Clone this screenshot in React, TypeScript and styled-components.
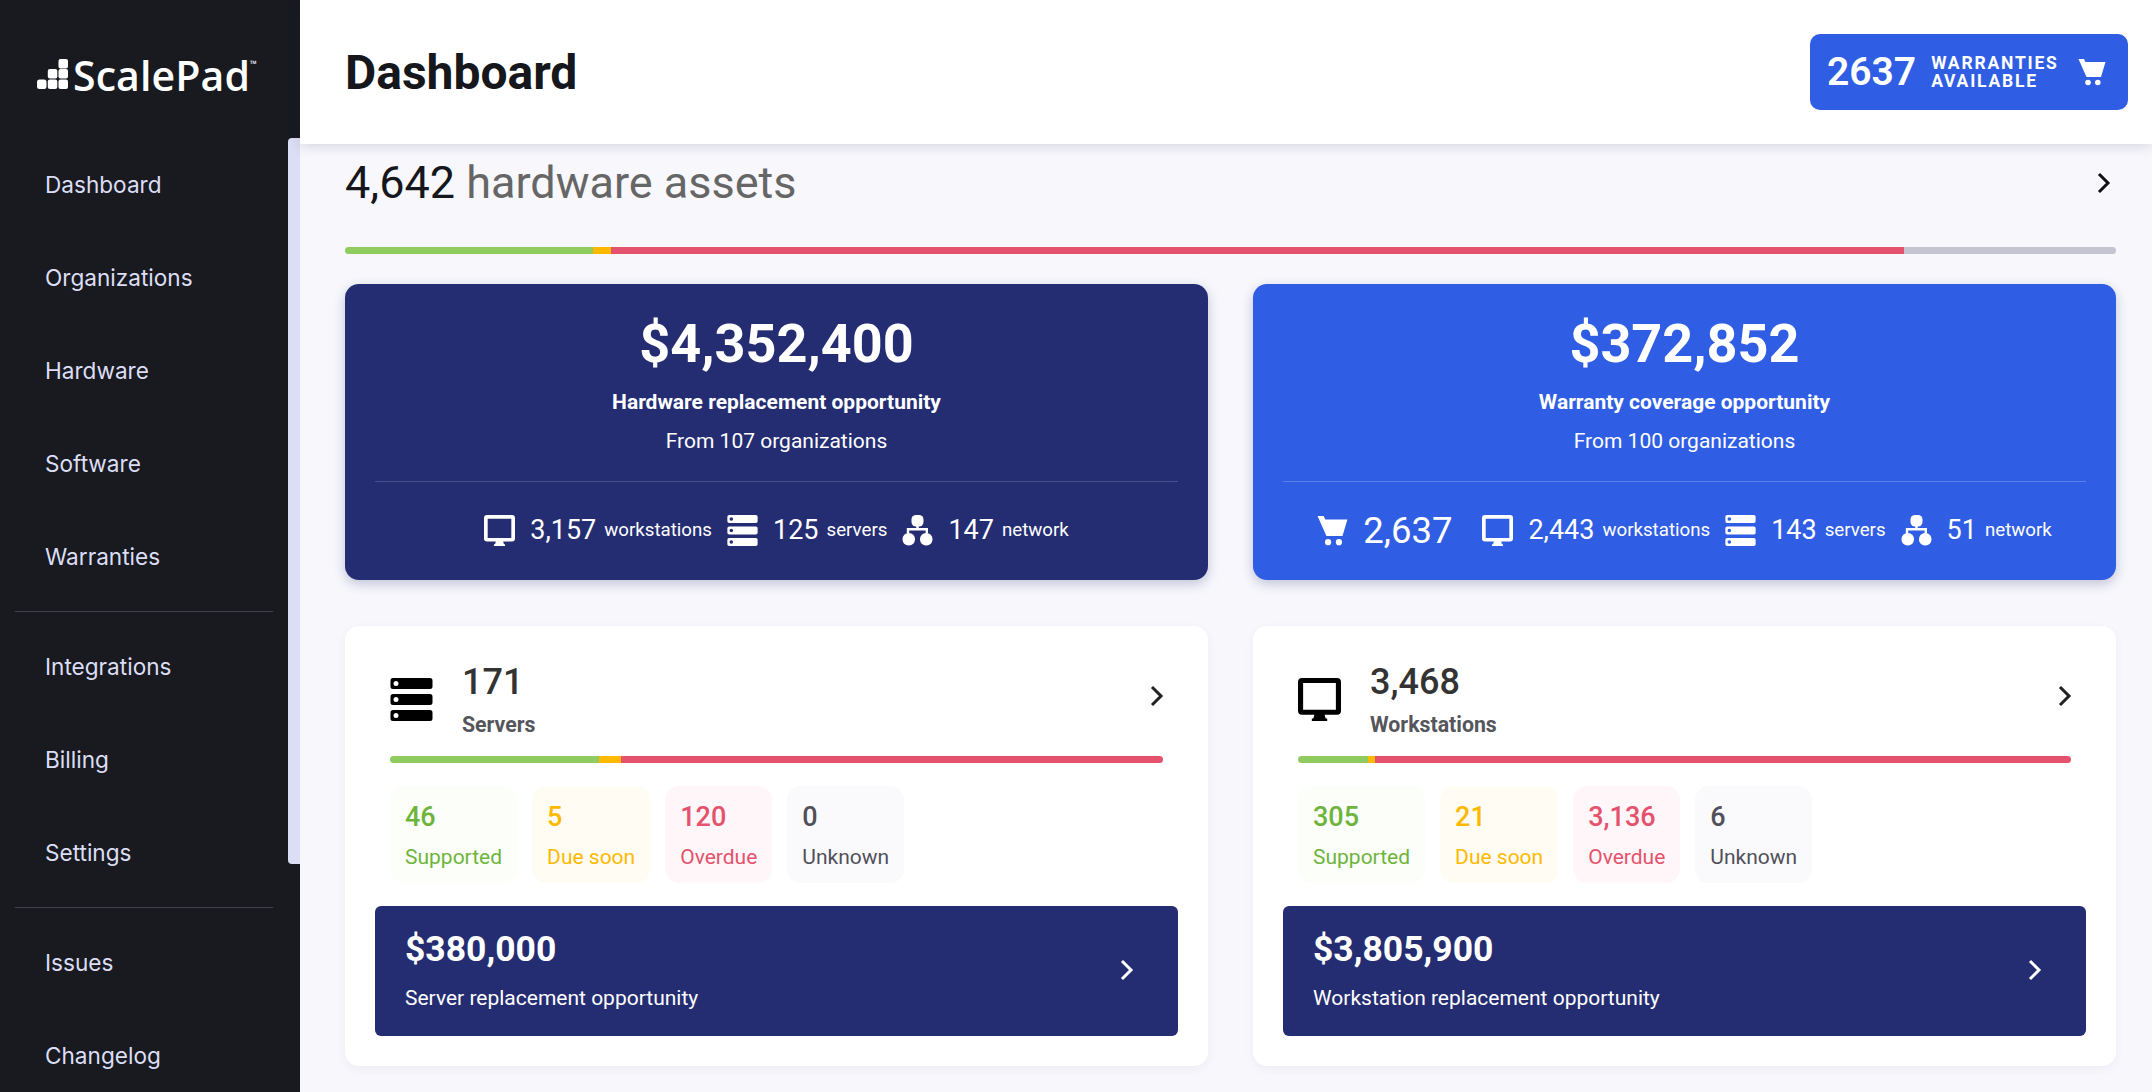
import React from "react";
import styled, {createGlobalStyle} from "styled-components";

const GlobalStyle = createGlobalStyle`
  html, body {
    margin: 0;
    padding: 0;
    height: 100%;
    overflow: hidden;
    background: #f7f7fc;
    font-family: Roboto, "Liberation Sans", sans-serif;
  }
  * {
    box-sizing: border-box;
  }
`

type IconProps = { size: number, color?: string }

const serverBar = (y: number) =>
    `M2.5 ${y}h37a2.5 2.5 0 0 1 2.5 2.5v6a2.5 2.5 0 0 1-2.5 2.5h-37a2.5 2.5 0 0 1-2.5-2.5v-6a2.5 2.5 0 0 1 2.5-2.5z` +
    `M5.5 ${y + 3}a2.5 2.5 0 1 0 0 5a2.5 2.5 0 1 0 0-5z`

const ServerIcon = ({size, color = "currentColor"}: IconProps) => (
    <svg width={size} height={size} viewBox="0 0 42 43" fill={color}>
        <path fillRule="evenodd" d={serverBar(0) + serverBar(16) + serverBar(32)}/>
    </svg>
)

const DesktopIcon = ({size, color = "currentColor"}: IconProps) => (
    <svg width={size} height={size} viewBox="0 0 42 42" fill={color}>
        <path
            fillRule="evenodd"
            d="M4 0h34a4 4 0 0 1 4 4v28a4 4 0 0 1-4 4H26l1 3.500h1.500V42h-15v-2.500H15l1-3.500H4a4 4 0 0 1-4-4V4a4 4 0 0 1 4-4zM5 5v26h32V5z"
        />
    </svg>
)

const NetworkIcon = ({size, color = "currentColor"}: IconProps) => (
    <svg width={size} height={size} viewBox="0 0 30 31" fill={color}>
        <rect x="9" y="0" width="12" height="11.500" rx="4.500"/>
        <path d="M13.800 11h2.400v2h9.300v5.500h-2.400v-3.100H6.700v3.100H4.300V13h9.500z"/>
        <rect x="0" y="18" width="12.500" height="12.500" rx="6"/>
        <rect x="17.500" y="18" width="12.500" height="12.500" rx="6"/>
    </svg>
)

const CartIcon = ({size, color = "currentColor"}: IconProps) => (
    <svg width={size} height={size} viewBox="0 0 27 28" fill={color}>
        <path d="M0 1h5.500l1.500 3h20l-4.500 15H8z"/>
        <circle cx="9.500" cy="24.500" r="2.800"/>
        <circle cx="19.300" cy="24.500" r="2.800"/>
    </svg>
)

const Chevron = ({color = "#111"}: { color?: string }) => (
    <svg width="14" height="22" viewBox="0 0 14 22" fill="none">
        <path d="M2 2l9 9-9 9" stroke={color} strokeWidth="3"/>
    </svg>
)

const LogoMark = () => (
    <svg width="31" height="30" viewBox="0 0 31 30" fill="#fff">
        <rect x="0" y="20.500" width="9.500" height="9.500" rx="2.500"/>
        <rect x="10.800" y="20.500" width="9.500" height="9.500" rx="2"/>
        <rect x="21.500" y="20.500" width="9.500" height="9.500" rx="2"/>
        <rect x="10.800" y="10" width="9.500" height="9.500" rx="2"/>
        <rect x="21.500" y="10" width="9.500" height="9.500" rx="2"/>
        <rect x="21.500" y="0" width="9.500" height="9.500" rx="2"/>
    </svg>
)

const navGroups = [
    ["Dashboard", "Organizations", "Hardware", "Software", "Warranties"],
    ["Integrations", "Billing", "Settings"],
    ["Issues", "Changelog"],
]

const Sidebar = () => (
    <Side>
        <Logo>
            <LogoMark/>
            <LogoText>ScalePad<sup>™</sup></LogoText>
        </Logo>
        {navGroups.map((group, i) => (
            <NavGroup key={i} $first={i === 0}>
                {group.map(label => <NavItem key={label}>{label}</NavItem>)}
            </NavGroup>
        ))}
        <ScrollThumb/>
    </Side>
)

type Segment = { color: string, width: number }

const Bar = ({segments}: { segments: Segment[] }) => (
    <BarTrack>
        {segments.map(s => <span key={s.color} style={{width: `${s.width}%`, background: s.color}}/>)}
    </BarTrack>
)

const GREEN = "#8fcb5f"
const YELLOW = "#fdb900"
const RED = "#e4526d"
const GREY = "#c5c5d2"

type Stat = { icon: "cart" | "desktop" | "server" | "network", value: string, label?: string }

const statIcons = {
    cart: CartIcon,
    desktop: DesktopIcon,
    server: ServerIcon,
    network: NetworkIcon,
}

type HeroProps = { amount: string, title: string, from: string, bg: string, rule: string, stats: Stat[] }

const Hero = ({amount, title, from, bg, rule, stats}: HeroProps) => (
    <HeroCard $bg={bg}>
        <HeroAmount>{amount}</HeroAmount>
        <HeroTitle>{title}</HeroTitle>
        <HeroFrom>{from}</HeroFrom>
        <HeroRule $color={rule}/>
        <StatRow>
            {stats.map(s => {
                const Icon = statIcons[s.icon]
                return (
                    <StatItem key={s.icon} $wide={!s.label}>
                        <Icon size={31}/>
                        <StatValue $wide={!s.label}>{s.value}</StatValue>
                        {s.label && <StatLabel>{s.label}</StatLabel>}
                    </StatItem>
                )
            })}
        </StatRow>
    </HeroCard>
)

type Chip = { value: string, label: string, kind: keyof typeof chipColors }

const chipColors = {
    ok: {fg: "#6eb43c", bg: "#fbfef9"},
    soon: {fg: "#fdb900", bg: "#fffcf4"},
    late: {fg: "#e4526d", bg: "#fff6f9"},
    none: {fg: "#50505a", bg: "#fafafc"},
}

type TypeCardProps = {
    icon: React.ReactNode,
    count: string,
    name: string,
    segments: Segment[],
    chips: Chip[],
    amount: string,
    caption: string,
}

const TypeCard = ({icon, count, name, segments, chips, amount, caption}: TypeCardProps) => (
    <Card>
        <CardHead>
            <CardIcon>{icon}</CardIcon>
            <CardTitles>
                <CardCount>{count}</CardCount>
                <CardName>{name}</CardName>
            </CardTitles>
            <CardArrow><Chevron color="#222"/></CardArrow>
        </CardHead>
        <CardBar>
            <Bar segments={segments}/>
        </CardBar>
        <ChipRow>
            {chips.map(c => (
                <ChipBox key={c.label} $bg={chipColors[c.kind].bg} $fg={chipColors[c.kind].fg}>
                    <ChipValue>{c.value}</ChipValue>
                    <ChipLabel>{c.label}</ChipLabel>
                </ChipBox>
            ))}
        </ChipRow>
        <Opportunity>
            <div>
                <OppAmount>{amount}</OppAmount>
                <OppCaption>{caption}</OppCaption>
            </div>
            <Chevron color="#fff"/>
        </Opportunity>
    </Card>
)

export default function App() {
    return (
        <Page>
            <GlobalStyle/>
            <Sidebar/>
            <Main>
                <Header>
                    <PageTitle>Dashboard</PageTitle>
                    <WarrantyButton>
                        <WarrantyCount>2637</WarrantyCount>
                        <WarrantyText>WARRANTIES<br/>AVAILABLE</WarrantyText>
                        <CartIcon size={28}/>
                    </WarrantyButton>
                </Header>
                <Content>
                    <AssetsRow>
                        <AssetsTitle><b>4,642</b> hardware assets</AssetsTitle>
                        <Chevron/>
                    </AssetsRow>
                    <Bar segments={[
                        {color: GREEN, width: 14},
                        {color: YELLOW, width: 1},
                        {color: RED, width: 73.050},
                        {color: GREY, width: 11.950},
                    ]}/>
                    <Columns $top={30}>
                        <Hero
                            amount="$4,352,400"
                            title="Hardware replacement opportunity"
                            from="From 107 organizations"
                            bg="#252d72"
                            rule="#4a5189"
                            stats={[
                                {icon: "desktop", value: "3,157", label: "workstations"},
                                {icon: "server", value: "125", label: "servers"},
                                {icon: "network", value: "147", label: "network"},
                            ]}
                        />
                        <Hero
                            amount="$372,852"
                            title="Warranty coverage opportunity"
                            from="From 100 organizations"
                            bg="#2f5ee4"
                            rule="#5a80ea"
                            stats={[
                                {icon: "cart", value: "2,637"},
                                {icon: "desktop", value: "2,443", label: "workstations"},
                                {icon: "server", value: "143", label: "servers"},
                                {icon: "network", value: "51", label: "network"},
                            ]}
                        />
                    </Columns>
                    <Columns $top={46}>
                        <TypeCard
                            icon={<ServerIcon size={43}/>}
                            count="171"
                            name="Servers"
                            segments={[
                                {color: GREEN, width: 27},
                                {color: YELLOW, width: 2.900},
                                {color: RED, width: 70.100},
                            ]}
                            chips={[
                                {value: "46", label: "Supported", kind: "ok"},
                                {value: "5", label: "Due soon", kind: "soon"},
                                {value: "120", label: "Overdue", kind: "late"},
                                {value: "0", label: "Unknown", kind: "none"},
                            ]}
                            amount="$380,000"
                            caption="Server replacement opportunity"
                        />
                        <TypeCard
                            icon={<DesktopIcon size={43}/>}
                            count="3,468"
                            name="Workstations"
                            segments={[
                                {color: GREEN, width: 9},
                                {color: YELLOW, width: 1},
                                {color: RED, width: 90},
                            ]}
                            chips={[
                                {value: "305", label: "Supported", kind: "ok"},
                                {value: "21", label: "Due soon", kind: "soon"},
                                {value: "3,136", label: "Overdue", kind: "late"},
                                {value: "6", label: "Unknown", kind: "none"},
                            ]}
                            amount="$3,805,900"
                            caption="Workstation replacement opportunity"
                        />
                    </Columns>
                </Content>
            </Main>
        </Page>
    )
}

const Page = styled.div`
  display: flex;
  height: 1092px;
  overflow: hidden;
`
const Side = styled.aside`
  position: relative;
  flex: 0 0 300px;
  height: 1092px;
  background: #181a20;
  overflow: hidden;
`
const ScrollThumb = styled.div`
  position: absolute;
  top: 138px;
  right: 0;
  width: 12px;
  height: 726px;
  background: #dcdef5;
  border-radius: 4px 0 0 4px;
`
const Logo = styled.div`
  display: flex;
  align-items: flex-end;
  gap: 5px;
  height: 89px;
  padding-left: 37px;
  color: #fff;
`
const LogoText = styled.div`
  font-family: "Open Sans", sans-serif;
  font-size: 41px;
  font-weight: 600;
  line-height: 41px;
  letter-spacing: 0.100px;
  height: 41px;
  margin-bottom: -7px;

  sup {
    font-size: 9px;
    line-height: 0;
    vertical-align: 24px;
  }
`
const NavGroup = styled.nav<{ $first: boolean }>`
  margin: ${p => p.$first ? "49px" : "0"} 27px 0 15px;
  padding: ${p => p.$first ? "0" : "8px"} 0 8px;
  border-top: ${p => p.$first ? "none" : "1px solid #414249"};
`
const NavItem = styled.div`
  height: 93px;
  display: flex;
  align-items: center;
  padding-left: 30px;
  font-family: Inter, sans-serif;
  font-size: 22.600px;
  color: #dcdef5;
`
const Main = styled.main`
  flex: 1;
  display: flex;
  flex-direction: column;
  min-width: 0;
  height: 1092px;
`
const Header = styled.header`
  position: relative;
  z-index: 2;
  flex: 0 0 144px;
  display: flex;
  align-items: center;
  justify-content: space-between;
  padding: 0 24px 0 45px;
  background: #fff;
  box-shadow: 0 2px 12px rgba(30, 30, 60, 0.16);
`
const PageTitle = styled.h1`
  margin: 0;
  font-size: 48px;
  font-weight: 700;
  color: #16171c;
`
const WarrantyButton = styled.div`
  display: flex;
  align-items: center;
  width: 318px;
  height: 76px;
  padding-left: 17px;
  background: #2f5ee4;
  border-radius: 10px;
  color: #fff;
`
const WarrantyCount = styled.div`
  font-size: 39px;
  font-weight: 600;
  margin-right: 15px;
`
const WarrantyText = styled.div`
  font-size: 17.500px;
  line-height: 18px;
  font-weight: 700;
  letter-spacing: 1.800px;
  margin-right: 19px;
`
const Content = styled.div`
  flex: 1;
  overflow: hidden;
  padding: 0 36px 0 45px;
`
const AssetsRow = styled.div`
  display: flex;
  align-items: center;
  justify-content: space-between;
  height: 78px;
  margin-bottom: 25px;
  padding-right: 5px;
`
const AssetsTitle = styled.div`
  margin-top: -2px;
  font-size: 45px;
  color: #666;

  b {
    font-weight: 400;
    color: #16171c;
  }
`
const BarTrack = styled.div`
  display: flex;
  height: 7px;
  border-radius: 4px;
  overflow: hidden;
`
const Columns = styled.div<{ $top: number }>`
  display: grid;
  grid-template-columns: 1fr 1fr;
  gap: 45px;
  margin-top: ${p => p.$top}px;
`
const HeroCard = styled.section<{ $bg: string }>`
  height: 296px;
  padding: 28px 30px 0;
  border-radius: 14px;
  background: ${p => p.$bg};
  color: #fff;
  text-align: center;
  box-shadow: 0 4px 12px rgba(37, 45, 114, 0.25);
`
const HeroAmount = styled.div`
  font-size: 54px;
  line-height: 64px;
  font-weight: 700;
`
const HeroTitle = styled.div`
  margin-top: 11px;
  font-size: 21px;
  line-height: 30px;
  font-weight: 700;
`
const HeroFrom = styled.div`
  margin-top: 9px;
  font-size: 21px;
  line-height: 30px;
`
const HeroRule = styled.div<{ $color: string }>`
  height: 1px;
  margin-top: 25px;
  background: ${p => p.$color};
`
const StatRow = styled.div`
  display: flex;
  align-items: center;
  justify-content: center;
  gap: 15px;
  height: 48px;
  margin-top: 24px;
`
const StatItem = styled.div<{ $wide: boolean }>`
  display: flex;
  align-items: center;
  margin-right: ${p => p.$wide ? "15px" : "0"};

  svg {
    margin-right: 15px;
  }
`
const StatValue = styled.span<{ $wide: boolean }>`
  font-size: ${p => p.$wide ? "36.500px" : "27px"};
  margin-right: ${p => p.$wide ? "0" : "8px"};
`
const StatLabel = styled.span`
  font-size: 18.700px;
`
const Card = styled.section`
  height: 440px;
  padding: 30px;
  background: #fff;
  border-radius: 14px;
  box-shadow: 0 3px 10px rgba(60, 60, 100, 0.06);
`
const CardHead = styled.div`
  display: flex;
  align-items: center;
  height: 86px;
  margin: 0 15px 14px;
`
const CardIcon = styled.div`
  display: flex;
  width: 72px;
  color: #000;
`
const CardTitles = styled.div`
  flex: 1;
`
const CardArrow = styled.div`
  display: flex;
  padding: 0 0 6px 0;
  margin-right: -1px;
`
const CardCount = styled.div`
  font-size: 36px;
  line-height: 52px;
  font-weight: 500;
  color: #333;
`
const CardName = styled.div`
  font-size: 21.300px;
  line-height: 34px;
  font-weight: 700;
  color: #55555c;
`
const CardBar = styled.div`
  margin: 0 15px;
`
const ChipRow = styled.div`
  display: flex;
  gap: 15px;
  margin: 23px 15px;
`
const ChipBox = styled.div<{ $bg: string, $fg: string }>`
  height: 97px;
  padding: 15px;
  border-radius: 14px;
  background: ${p => p.$bg};
  color: ${p => p.$fg};
`
const ChipValue = styled.div`
  font-size: 27px;
  line-height: 32px;
  font-weight: 500;
`
const ChipLabel = styled.div`
  margin-top: 9px;
  font-size: 21px;
  line-height: 30px;
`
const Opportunity = styled.div`
  display: flex;
  align-items: center;
  justify-content: space-between;
  height: 130px;
  padding: 0 44px 2px 30px;
  background: #252d72;
  border-radius: 6px;
  color: #fff;
`
const OppAmount = styled.div`
  font-size: 35.500px;
  line-height: 43px;
  font-weight: 700;
`
const OppCaption = styled.div`
  margin-top: 12px;
  font-size: 21px;
  line-height: 30px;
`
